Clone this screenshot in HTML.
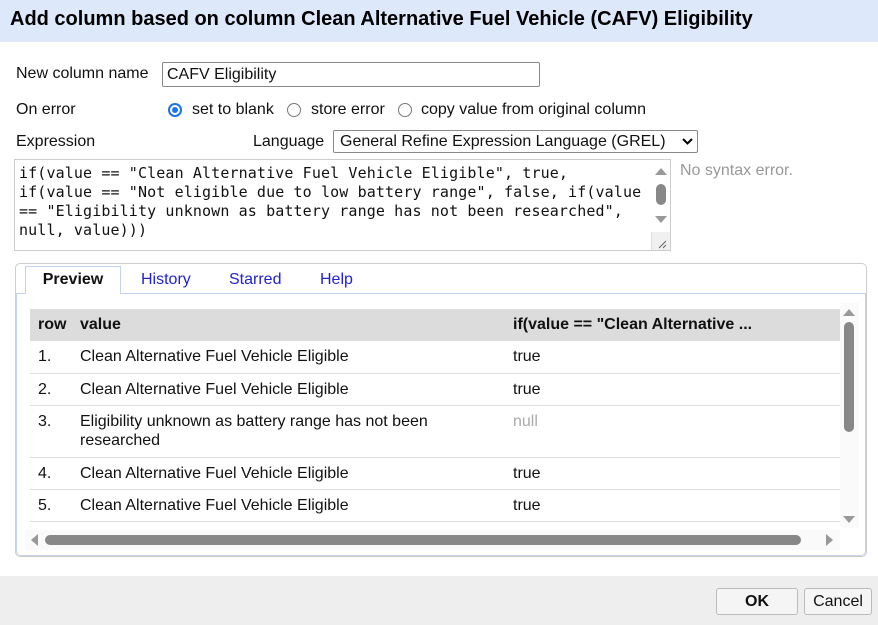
<!DOCTYPE html><html><head><style>
*{box-sizing:border-box;margin:0;padding:0}
body{width:878px;height:625px;position:relative;background:#fff;font-family:"Liberation Sans",Arial,sans-serif;font-size:16px;color:#111;overflow:hidden}
.a{position:absolute;white-space:nowrap}
.rad{position:absolute;width:14px;height:14px;border:1px solid #777;border-radius:50%;background:#fff}
.mono{font-family:"DejaVu Sans Mono","Liberation Mono",monospace;font-size:15px;letter-spacing:0.12px;line-height:19px}
.sep{position:absolute;left:30px;width:810px;height:1px;background:#ddd}
.tri{position:absolute;width:0;height:0}
</style></head><body>
<div class="a" style="left:0;top:0;width:878px;height:42px;background:#dde9fb"></div>
<div class="a" style="left:10px;top:8px;font-size:20px;font-weight:bold;color:#000">Add column based on column Clean Alternative Fuel Vehicle (CAFV) Eligibility</div>

<div class="a" style="left:16px;top:65px">New column name</div>
<div class="a" style="left:162px;top:62px;width:378px;height:25px;border:1px solid #888;border-radius:2px;padding:3px 4px">CAFV Eligibility</div>

<div class="a" style="left:16px;top:101px">On error</div>
<div class="rad" style="left:168px;top:103px;border:2px solid #1a73e8"><div style="position:absolute;left:2px;top:2px;width:6px;height:6px;border-radius:50%;background:#1a73e8"></div></div>
<div class="a" style="left:192px;top:101px">set to blank</div>
<div class="rad" style="left:287px;top:103px"></div>
<div class="a" style="left:311px;top:101px">store error</div>
<div class="rad" style="left:398px;top:103px"></div>
<div class="a" style="left:421px;top:101px">copy value from original column</div>

<div class="a" style="left:16px;top:133px">Expression</div>
<div class="a" style="left:253px;top:133px">Language</div>
<div class="a" style="left:333px;top:130px;width:365px;height:23px;border:1px solid #888;border-radius:2px;padding:2px 6px">General Refine Expression Language (GREL)<svg style="position:absolute;right:4px;top:7px" width="11" height="8"><path d="M1 1l4.5 4.5L10 1" stroke="#000" stroke-width="2" fill="none"/></svg></div>

<div class="a" style="left:14px;top:159px;width:657px;height:92px;border:1px solid #ccc"></div>
<div class="a mono" style="left:19px;top:164px">if(value == "Clean Alternative Fuel Vehicle Eligible", true,<br>if(value == "Not eligible due to low battery range", false, if(value<br>== "Eligibility unknown as battery range has not been researched",<br>null, value)))</div>
<div class="a" style="left:651px;top:160px;width:19px;height:90px;background:#fff"></div>
<div class="tri" style="left:655px;top:168px;border-left:6px solid transparent;border-right:6px solid transparent;border-bottom:7px solid #999"></div>
<div class="a" style="left:656px;top:184px;width:10px;height:21px;border-radius:5px;background:#888"></div>
<div class="tri" style="left:655px;top:216px;border-left:6px solid transparent;border-right:6px solid transparent;border-top:7px solid #999"></div>
<div class="a" style="left:651px;top:232px;width:19px;height:18px;background:#f0f0f0;border-left:1px solid #ddd"></div>
<svg class="a" style="left:658px;top:240px" width="10" height="9"><path d="M1 8L8 1M5 8L8 5" stroke="#666"/></svg>
<div class="a" style="left:680px;top:162px;color:#999">No syntax error.</div>

<div class="a" style="left:15px;top:263px;width:852px;height:294px;border:1px solid #ccc;border-radius:5px"></div>
<div class="a" style="left:16px;top:293px;width:850px;height:263px;border:1px solid #c4d3f0;border-radius:0 0 5px 5px"></div>
<div class="a" style="left:25px;top:266px;width:96px;height:28px;border:1px solid #c4d3f0;border-bottom:none;background:#fff;font-weight:bold;text-align:center;padding-top:4px">Preview</div>
<div class="a" style="left:141px;top:271px;color:#2323c8">History</div>
<div class="a" style="left:229px;top:271px;color:#2323c8">Starred</div>
<div class="a" style="left:320px;top:271px;color:#2323c8">Help</div>

<div class="a" style="left:30px;top:309px;width:810px;height:32px;background:#dcdcdc"></div>
<div class="a" style="left:38px;top:316px;font-weight:bold">row</div>
<div class="a" style="left:80px;top:316px;font-weight:bold">value</div>
<div class="a" style="left:513px;top:316px;font-weight:bold">if(value == "Clean Alternative ...</div>
<div class="a" style="left:38px;top:348px">1.</div><div class="a" style="left:80px;top:348px">Clean Alternative Fuel Vehicle Eligible</div><div class="a" style="left:513px;top:348px">true</div>
<div class="sep" style="top:373px"></div>
<div class="a" style="left:38px;top:381px">2.</div><div class="a" style="left:80px;top:381px">Clean Alternative Fuel Vehicle Eligible</div><div class="a" style="left:513px;top:381px">true</div>
<div class="sep" style="top:405px"></div>
<div class="a" style="left:38px;top:413px">3.</div><div class="a" style="left:80px;top:412px;line-height:19px">Eligibility unknown as battery range has not been<br>researched</div><div class="a" style="left:513px;top:413px;color:#aaa">null</div>
<div class="sep" style="top:457px"></div>
<div class="a" style="left:38px;top:465px">4.</div><div class="a" style="left:80px;top:465px">Clean Alternative Fuel Vehicle Eligible</div><div class="a" style="left:513px;top:465px">true</div>
<div class="sep" style="top:489px"></div>
<div class="a" style="left:38px;top:497px">5.</div><div class="a" style="left:80px;top:497px">Clean Alternative Fuel Vehicle Eligible</div><div class="a" style="left:513px;top:497px">true</div>
<div class="sep" style="top:521px"></div>

<div class="a" style="left:840px;top:303px;width:19px;height:225px;background:#fafafa"></div>
<div class="tri" style="left:843px;top:309px;border-left:6px solid transparent;border-right:6px solid transparent;border-bottom:7px solid #999"></div>
<div class="a" style="left:844px;top:322px;width:10px;height:110px;border-radius:5px;background:#888"></div>
<div class="tri" style="left:843px;top:516px;border-left:6px solid transparent;border-right:6px solid transparent;border-top:7px solid #999"></div>
<div class="a" style="left:25px;top:530px;width:815px;height:20px;background:#fafafa"></div>
<div class="tri" style="left:31px;top:534px;border-top:6px solid transparent;border-bottom:6px solid transparent;border-right:7px solid #999"></div>
<div class="a" style="left:45px;top:535px;width:756px;height:10px;border-radius:5px;background:#888"></div>
<div class="tri" style="left:826px;top:534px;border-top:6px solid transparent;border-bottom:6px solid transparent;border-left:7px solid #999"></div>

<div class="a" style="left:0;top:576px;width:878px;height:49px;background:#eee"></div>
<div class="a" style="left:716px;top:588px;width:82px;height:27px;border:1px solid #bbb;border-radius:3px;background:#f5f5f5;font-weight:bold;text-align:center;padding-top:4px">OK</div>
<div class="a" style="left:804px;top:588px;width:68px;height:27px;border:1px solid #bbb;border-radius:3px;background:#f5f5f5;text-align:center;padding-top:4px">Cancel</div>
</body></html>
